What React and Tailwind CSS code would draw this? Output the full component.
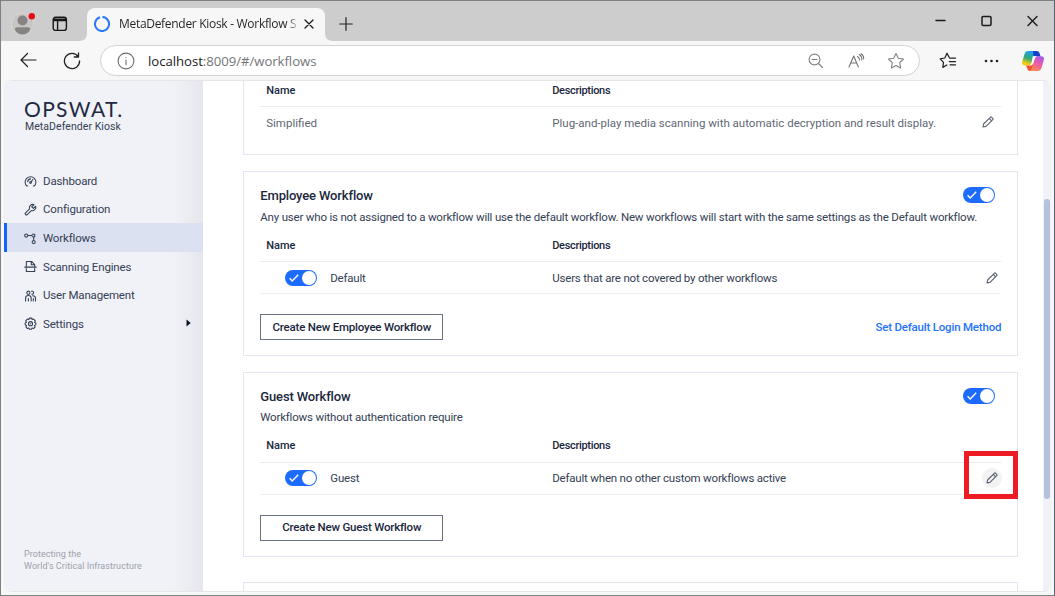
import React from 'react';

const line = { fill: 'none', stroke: 'currentColor', strokeLinecap: 'round', strokeLinejoin: 'round' };

function Pencil() {
  return (
    <svg width="12" height="12" viewBox="0 0 12 12" {...line} strokeWidth="1.15">
      <path d="M1 11l.6-3L8.3 1.3a1 1 0 0 1 1.4 0l1 1a1 1 0 0 1 0 1.4L4 10.4zM7.2 2.4l2.4 2.4" />
    </svg>
  );
}

function Toggle() {
  return (
    <span className="flex h-4 w-8 shrink-0 items-center justify-between rounded-full bg-[#1d6bfc] pr-[1px] pl-1">
      <svg width="10" height="8" viewBox="0 0 10 8" fill="none" stroke="#fff" strokeWidth="1.4">
        <path d="M.6 4.2l2.6 2.7L9.2.8" />
      </svg>
      <span className="size-[14px] rounded-full bg-white" />
    </span>
  );
}

function TableHead({ className }) {
  return (
    <div className={'flex items-center border-b border-[#e9ebf0] pl-[6px] text-[11px] font-medium text-[#1b273c] ' + className}>
      <span className="w-[286px]">Name</span>
      <span className="tracking-[-0.32px]">Descriptions</span>
    </div>
  );
}

function Card({ title, subtitle, name, description, button, link, focused }) {
  return (
    <section className="h-[185px] shrink-0 border border-[#e3e6f0] px-4 pt-[11px]">
      <div className="flex h-6 items-center justify-between pr-[6px]">
        <h2 className="pt-px text-[13px] font-medium tracking-[-0.14px] text-[#1b273c]">{title}</h2>
        <Toggle />
      </div>
      <p className={'h-5 text-[11.5px] tracking-[-0.19px] whitespace-nowrap ' + (focused ? 'leading-[18px]' : 'leading-5')}>{subtitle}</p>
      <TableHead className={focused ? 'mt-[2px] h-[33px]' : 'mt-[3px] h-8 pt-[2px]'} />
      <div className="flex h-8 items-center border-b border-[#eef0f4] pl-[25px] text-[11.5px] tracking-[-0.2px]">
        <span className={focused ? 'mb-px' : ''}><Toggle /></span>
        <span className={'ml-[13px] w-[222px] ' + (focused ? '' : 'pt-[2px]')}>{name}</span>
        <span className={'flex-1 ' + (focused ? '' : 'pt-[2px]')}>{description}</span>
        <span className={'-mr-px flex size-5 items-center justify-center rounded-full text-[#5b6270] ' + (focused ? 'mb-px bg-[#f2f2f3]' : '')}>
          <Pencil />
        </span>
      </div>
      <div className={'flex items-center justify-between font-medium ' + (focused ? 'mt-[19.5px]' : 'mt-5')}>
        <button className={'h-[26px] w-[183px] border border-[#6a7282] text-[11.5px] tracking-[-0.2px] text-[#1b273c] ' + (focused ? '' : 'pt-px')}>{button}</button>
        {link && <a className="pt-px text-[11.5px] tracking-[-0.2px] text-[#2672fb]">{link}</a>}
      </div>
    </section>
  );
}

const nav = [
  ['Dashboard', <path d="M4 11.800H3A5.800 5.800 0 1 1 11 11.800H10M6 8.200a1 1 0 1 0 2 0 1 1 0 1 0-2 0M7.700 7.400L9.500 4.900M3.900 7.200Q4.600 4.300 7 4.200" />],
  ['Configuration', <path d="M12.500 3.500L10 5.900 8.300 4.200 10.700 1.700A3.700 3.700 0 0 0 6 6.300L1.700 10.600a1.200 1.200 0 0 0 1.800 1.800L7.900 8.100A3.700 3.700 0 0 0 12.500 3.500z" />],
  ['Workflows', <path d="M.7 3.800a1.700 1.700 0 1 0 3.400 0 1.700 1.700 0 1 0-3.400 0M4.100 3.800H8.800M8.800 2.400h2.800v2.800H8.800M10.400 5.200V9.200M8.700 10.900a1.700 1.700 0 1 0 3.400 0 1.700 1.700 0 1 0-3.400 0" />],
  ['Scanning Engines', <path d="M2.500 7.500V1.600h5.700L11.500 4.900v2.600M7.800 1.900V5.100H11.300M.8 7.700h12.400M2.500 9.200v3.200h9V9.200" />],
  ['User Management', <path d="M3 4a1.700 1.700 0 1 0 3.400 0 1.700 1.700 0 1 0-3.400 0M1.700 13V10a3 3 0 0 1 6 0v3M4.700 10.400v2.600M8.100 2.400A1.700 1.700 0 1 1 8.400 5.700M9.300 7.200A3 3 0 0 1 12.400 10v3M10 10.400v2.600" />],
  ['Settings', <path d="M5.700 1.200h2.600l.4 1.500 1.700-.5 1.800 2-.9 1.500 1.500.9v1.600l-1.500.9.7 1.600-1.700 1.800-1.600-.6-.7 1.300H6l-.7-1.300-1.600.6-1.700-1.800.7-1.600-1.500-.9V6.600l1.500-.9-.9-1.500 1.800-2 1.700.5zM4.800 7.200a2.200 2.200 0 1 0 4.400 0 2.200 2.200 0 1 0-4.400 0M6.800 7.200h.4" />],
];

function Sidebar() {
  return (
    <aside className="flex w-[198.5px] shrink-0 flex-col bg-[linear-gradient(90deg,#f1f2f8_0%,#f1f2f8_85%,#e6e7ed_100%)] text-[#344054]">
      <div className="flex flex-col pt-[16px] pl-5">
        <span className="h-6 font-[Lato] text-[21px] leading-[23px] font-normal tracking-[1.35px] text-[#1d2a42]">OPSWAT.</span>
        <span className="ml-px text-[10.5px] leading-3 tracking-[0.06px] text-[#344054]">MetaDefender Kiosk</span>
      </div>
      <nav className="mt-[33px] flex flex-col">
        {nav.map(([label, icon], i) => (
          <a
            key={label}
            className={'flex h-[28.5px] items-center border-l-[3px] pt-[2px] pl-[17px] text-[11.5px] tracking-[-0.16px] ' + (i === 2 ? 'border-[#1463ff] bg-[#dbe1f1]' : 'border-transparent')}
          >
            <svg width="13" height="13" viewBox="0 0 14 14" {...line} strokeWidth="1.15">{icon}</svg>
            <span className={'ml-[6px] flex-1 ' + (i > 2 ? 'pt-[1.5px]' : '')}>{label}</span>
            {i === 5 && (
              <svg width="5" height="8" viewBox="0 0 5 8" className="mr-[12px] mb-[2px]" fill="#0b1529">
                <path d="M.5.5v7L4.7 4z" />
              </svg>
            )}
          </a>
        ))}
      </nav>
      <p className="mt-auto mb-[19px] pl-5 text-[9px] leading-3 tracking-[0.06px] text-[#9ba1ab]">
        Protecting the
        <br />
        World's Critical Infrastructure
      </p>
    </aside>
  );
}

function TitleBar() {
  return (
    <div className="flex h-10 shrink-0 items-end bg-[#cdcdcd] pl-[10px]">
      <svg width="26" height="26" viewBox="0 0 26 26" className="mb-[4px]">
        <circle cx="11.5" cy="13" r="11" fill="#c8c6c4" stroke="#d8d6d4" />
        <circle cx="11.5" cy="9.5" r="5" fill="#868482" />
        <path d="M3.800 18.500q0-2.200 2.200-2.200h11q2.200 0 2.200 2.200-2.400 5-7.700 5t-7.700-5z" fill="#868482" />
        <circle cx="20.8" cy="5.2" r="3.2" fill="#e60b12" />
      </svg>
      <svg width="16" height="16" viewBox="0 0 16 16" className="mb-[9px] ml-[15px]" fill="none" stroke="#161616" strokeWidth="1.4">
        <rect x="1.2" y="1.2" width="13.2" height="13.2" rx="2.4" />
        <path d="M1.5 3.2h12.6M1.5 4.6h12.6M5.6 5v9.4" />
      </svg>
      <div className="ml-[11px] flex h-[33px] items-end">
        <svg width="8" height="8" viewBox="0 0 8 8" fill="#f7f7f7"><path d="M8 0v8H0q8 0 8-8z" /></svg>
        <div className="flex h-[33px] w-[238px] items-center rounded-t-[8px] bg-[#f7f7f7] pl-[7px]">
          <svg width="16" height="16" viewBox="0 0 16 16" className="mb-px" fill="none" stroke="#2b79f7" strokeWidth="2">
            <path d="M6 1.300A7 7 0 1 0 8 1M9 1.100q2.200.3 3.400 1.400" strokeDasharray="41 1.500" />
          </svg>
          <span className="ml-[9px] w-[178px] bg-linear-to-r from-[#222] from-94% to-[#c4c4c4] bg-clip-text pb-px font-['Open_Sans'] text-[12px] tracking-[-0.3px] whitespace-nowrap text-transparent">
            MetaDefender Kiosk - Workflow S
          </span>
          <svg width="10" height="10" viewBox="0 0 10 10" className="mb-px ml-[7px]" {...line} stroke="#1c1c1c" strokeWidth="1.3">
            <path d="M1 1l8 8M9 1L1 9" />
          </svg>
        </div>
        <svg width="8" height="8" viewBox="0 0 8 8" fill="#f7f7f7"><path d="M0 0v8h8q-8 0-8-8z" /></svg>
      </div>
      <svg width="14" height="14" viewBox="0 0 14 14" className="mb-[10px] ml-[6px]" {...line} stroke="#222" strokeWidth="1.2">
        <path d="M7 .7v12.6M.7 7h12.6" />
      </svg>
      <div className="mr-[16px] mb-[14px] ml-auto flex items-center gap-[35px] text-[#1b1b1b]">
        <svg width="11" height="12" viewBox="0 0 11 12" {...line} strokeWidth="1.5"><path d="M1 5.500h9" /></svg>
        <svg width="11" height="12" viewBox="0 0 11 12" {...line} strokeWidth="1.5"><rect x="1" y="1.4" width="9" height="9" rx="1.2" /></svg>
        <svg width="11" height="12" viewBox="0 0 11 12" {...line} strokeWidth="1.4"><path d="M1 1.500l9 9M10 1.500l-9 9" /></svg>
      </div>
    </div>
  );
}

const star = 'M9 1.5l2.3 4.8 5.2.7-3.8 3.7.9 5.3L9 13.5 4.4 16l.9-5.3L1.5 7l5.2-.7z';

function Toolbar() {
  return (
    <div className="flex h-[39px] shrink-0 items-center pl-[19px] font-['Open_Sans']">
      <svg width="17" height="16" viewBox="0 0 17 16" className="mb-px" {...line} stroke="#222" strokeWidth="1.2"><path d="M16 8H1M7.5 1.5L1 8l6.5 6.5" /></svg>
      <svg width="18" height="18" viewBox="0 0 18 18" className="ml-[26px]" {...line} stroke="#222" strokeWidth="1.3">
        <path d="M15.2 4.6A7.6 7.6 0 1 0 16.6 9M15.5 1v4h-4.2" />
      </svg>
      <div className="ml-[19px] flex h-[31px] w-[820px] items-center rounded-full border border-[#d2d2d2] bg-white pr-[14px] pl-[16px]">
        <svg width="18" height="18" viewBox="0 0 18 18" {...line} stroke="#6e6e6e" strokeWidth="1.1">
          <circle cx="9" cy="9" r="7.9" /><path d="M9 8v4.6M9 5.4v.2" />
        </svg>
        <span className="ml-[13px] flex-1 pt-[2px] text-[13.2px] tracking-[-0.05px] text-[#757575]"><span className="text-[#1c1c1c]">localhost</span>:8009/#/workflows</span>
        <svg width="16" height="16" viewBox="0 0 16 16" {...line} stroke="#808080" strokeWidth="1.1">
          <circle cx="6.5" cy="6.5" r="5.4" /><path d="M4 6.5h5M10.5 10.5L14.5 14.5" />
        </svg>
        <svg width="17" height="16" viewBox="0 0 17 16" className="ml-[24px]" {...line} stroke="#757575" strokeWidth="1.1">
          <path d="M1 14L5.7 3 10.4 14M2.7 10h6M9.5 3.5q2 1 2 3.5M11.2 1.5q3 1.7 2.6 5.5M13 .8q3 1.8 2.6 5.2" />
        </svg>
        <svg width="18" height="18" viewBox="0 0 18 18" className="ml-[22px]" {...line} stroke="#808080" strokeWidth="1.1"><path d={star} /></svg>
      </div>
      <svg width="18" height="18" viewBox="0 0 18 18" className="ml-[19px]" {...line} stroke="#222" strokeWidth="1.25">
        <path d="M10.5 6L8 1.2 5.8 6 1.2 6.8l3.3 3.6-.7 5L7.8 13M11.5 6.2h5M10.3 9.5h6.2M11 12.8h5.5" />
      </svg>
      <svg width="15" height="4" viewBox="0 0 15 4" className="ml-[27px]" fill="#222">
        <circle cx="2" cy="2" r="1.3" /><circle cx="7.5" cy="2" r="1.3" /><circle cx="13" cy="2" r="1.3" />
      </svg>
      <svg width="24" height="22" viewBox="0 0 24 22" className="ml-[22px]">
        <defs>
          <linearGradient id="cl" x1=".5" y1="0" x2=".2" y2="1"><stop offset="0" stopColor="#18a0ee" /><stop offset=".5" stopColor="#38a875" /><stop offset=".85" stopColor="#f3cd12" /></linearGradient>
          <linearGradient id="cr" x1=".8" y1="0" x2=".3" y2="1"><stop offset="0" stopColor="#a557f5" /><stop offset=".5" stopColor="#ec5ba2" /><stop offset="1" stopColor="#fc8a50" /></linearGradient>
        </defs>
        <path d="M7 .9h9q-1.600.5-2.200 2.600L11.500 11.500Q10.300 15.500 7.600 15.500H4Q.3 15.500 1.200 11.800L3.500 4Q4.500.9 7 .9z" fill="url(#cl)" />
        <path d="M12 .9h4q2 0 2.700 2.500L19.500 6.500H12.500z" fill="#1640c9" />
        <path d="M5 15.500h3q2.500 0 3.500-3L13 16l-1.500 5H9q-2 0-2.500-2z" fill="#f2512e" />
        <path d="M17 21H8.500q1.600-.5 2.200-2.600L13 10.500Q14.200 6.300 17 6.300h3q3.700 0 2.800 3.700L20.500 18Q19.500 21 17 21z" fill="url(#cr)" />
        <path d="M11.800 6.300h4q-1.800 1-2.400 3.200l-1.300 4.200q-.6 2-3.600 2 1.400-.8 2-3z" fill="#fff" />
      </svg>
    </div>
  );
}

export default function App() {
  return (
    <div className="flex h-[596px] w-[1055px] flex-col overflow-hidden border border-[#7f8084] border-r-[#5b6070] bg-[#f7f7f7] font-[Roboto,sans-serif] text-[#344054]">
      <TitleBar />
      <Toolbar />
      <div className="mr-[3px] ml-[3px] flex h-[512px] overflow-hidden rounded-[8px] border-y border-[#e6e6e6] bg-white">
        <Sidebar />
        <main className="ml-[40.75px] flex w-[775px] shrink-0 flex-col overflow-hidden">
          <section className="mb-4 h-[74px] shrink-0 border border-t-0 border-[#e3e6f0] px-4">
            <TableHead className="h-[26px] pb-[5px]" />
            <div className="flex h-8 items-center pl-[6px] text-[11.5px] text-[#5f6775]">
              <span className="w-[286px] pt-[2px]">Simplified</span>
              <span className="flex-1 pt-[2px]">Plug-and-play media scanning with automatic decryption and result display.</span>
              <span className="mr-[7px] mb-[3px]"><Pencil /></span>
            </div>
          </section>
          <Card
            title="Employee Workflow"
            subtitle="Any user who is not assigned to a workflow will use the default workflow. New workflows will start with the same settings as the Default workflow."
            name="Default"
            description="Users that are not covered by other workflows"
            button="Create New Employee Workflow"
            link="Set Default Login Method"
          />
          <div className="relative mt-4">
            <Card
              title="Guest Workflow"
              subtitle="Workflows without authentication require"
              name="Guest"
              description="Default when no other custom workflows active"
              button="Create New Guest Workflow"
              focused
            />
            <span className="absolute top-[79px] right-0 h-12 w-[54px] border-[5px] border-[#ed1c24]" />
          </div>
          <section className="mt-[25px] h-12 shrink-0 border border-[#e3e6f0]" />
        </main>
        <div className="ml-auto flex w-2 flex-col bg-[#f1f2f8] px-[1px] pt-[118px]">
          <span className="h-[300px] rounded-full bg-[#b5c1df]" />
        </div>
      </div>
    </div>
  );
}
